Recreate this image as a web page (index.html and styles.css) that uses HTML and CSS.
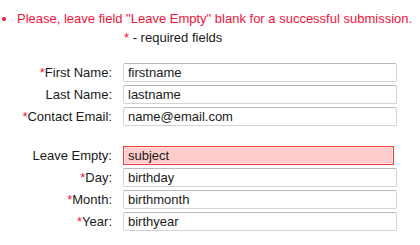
FILE: index.html
```html
<!DOCTYPE html>
<html lang="en">

<head>
    <meta charset="UTF-8">
    <title>Form</title>
    <link rel="stylesheet" href="styles.css">
</head>

<body>
    <ul class="notice">
        <li>Please, leave field "Leave Empty" blank for a successful submission.</li>
    </ul>
    <p class="required-note"><span class="req">*</span> - required fields</p>

    <form class="form">
        <div class="form-row">
            <label for="firstname"><span class="req">*</span>First Name:</label>
            <input type="text" id="firstname" value="firstname">
        </div>
        <div class="form-row">
            <label for="lastname">Last Name:</label>
            <input type="text" id="lastname" value="lastname">
        </div>
        <div class="form-row">
            <label for="email"><span class="req">*</span>Contact Email:</label>
            <input type="text" id="email" value="name@email.com">
        </div>

        <div class="form-row spaced">
            <label for="subject">Leave Empty:</label>
            <input type="text" id="subject" class="trap" value="subject">
        </div>
        <div class="form-row">
            <label for="day"><span class="req">*</span>Day:</label>
            <input type="text" id="day" value="birthday">
        </div>
        <div class="form-row">
            <label for="month"><span class="req">*</span>Month:</label>
            <input type="text" id="month" value="birthmonth">
        </div>
        <div class="form-row">
            <label for="year"><span class="req">*</span>Year:</label>
            <input type="text" id="year" value="birthyear">
        </div>
    </form>
</body>

</html>
```

FILE: styles.css
```css
body {
    margin: 0;
    font-family: "Liberation Sans", Arial, sans-serif;
    font-size: 13px;
    color: #1a1a1a;
}

.notice {
    margin: 11px 0 0 0;
    padding: 0 0 0 17px;
    color: #f0143c;
    white-space: nowrap;
}

.required-note {
    margin: 4px 0 0 0;
    padding-left: 124px;
}

.req {
    color: #f0143c;
}

.form {
    margin-top: 18px;
}

.form-row {
    display: flex;
    align-items: center;
    height: 19px;
    margin-bottom: 3px;
}

.form-row.spaced {
    margin-top: 20px;
}

.form-row label {
    width: 112px;
    text-align: right;
    margin-right: 11px;
}

.form-row input {
    width: 274px;
    height: 19px;
    box-sizing: border-box;
    padding: 0 4px;
    font-family: inherit;
    font-size: 13px;
    color: #1a1a1a;
    background: #fff;
    border: 1px solid #d4d4d8;
    border-top-color: #b8b8bc;
    border-radius: 2px;
}

.form-row input.trap {
    width: 271px;
    background: #ffcccc;
    border: 1px solid #f03c3c;
    box-shadow: inset 0 0 0 1px #ffe4e4;
    border-radius: 0;
}
```
